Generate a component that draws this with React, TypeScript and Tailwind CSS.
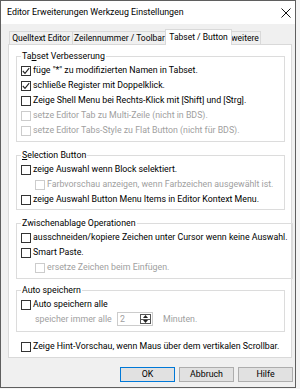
import React from "react";

type Row = {
  label: React.ReactNode;
  checked?: boolean;
  disabled?: boolean;
  indent?: boolean;
};

function CheckBox({ checked, disabled }: { checked?: boolean; disabled?: boolean }) {
  return (
    <span
      className={`flex h-[10px] w-[10px] shrink-0 items-center justify-center border bg-white ${
        disabled ? "border-[#cccccc]" : "border-[#333333]"
      }`}
    >
      {checked && (
        <svg width="8" height="8" viewBox="0 0 8 8">
          <polyline points="0.8,4 3,6.3 7.2,1.2" fill="none" stroke="#222" strokeWidth="1.1" />
        </svg>
      )}
    </span>
  );
}

function CheckRow({ label, checked, disabled, indent }: Row) {
  return (
    <div className={`flex h-[15px] items-center gap-[2px] ${indent ? "pl-[14px]" : ""}`}>
      <CheckBox checked={checked} disabled={disabled} />
      <span className={`whitespace-nowrap ${disabled ? "text-[#a0a0a0]" : "text-black"}`}>{label}</span>
    </div>
  );
}

function Group({
  title,
  children,
  className = "",
}: {
  title: React.ReactNode;
  children: React.ReactNode;
  className?: string;
}) {
  return (
    <fieldset className={`border border-[#dcdcdc] pl-[4px] pr-[4px] ${className}`}>
      <legend className="h-[13px] px-[1px] leading-[13px] text-black">{title}</legend>
      {children}
    </fieldset>
  );
}

function Tab({ label, selected, className = "" }: { label: string; selected?: boolean; className?: string }) {
  if (selected) {
    return (
      <div
        className={`relative z-10 -mx-[2px] -mb-px flex h-[16px] items-center justify-center border border-b-0 border-[#d9d9d9] bg-white pb-[1px] whitespace-nowrap ${className}`}
      >
        {label}
      </div>
    );
  }
  return (
    <div
      className={`flex h-[13px] items-center justify-center border border-b-0 border-[#d9d9d9] bg-[#f0f0f0] whitespace-nowrap ${className}`}
    >
      {label}
    </div>
  );
}

function Button({ label, primary }: { label: string; primary?: boolean }) {
  return (
    <div
      className={`flex h-[15px] w-[55px] items-center justify-center border bg-[#e1e1e1] ${
        primary ? "border-[#0078d7]" : "border-[#adadad]"
      }`}
    >
      {label}
    </div>
  );
}

export default function App() {
  return (
    <div className="h-[389px] w-[300px] bg-[#f4f4f4] font-['Roboto',sans-serif] text-[8.8px] leading-none text-black">
      <div className="flex h-[388px] w-[296px] flex-col border border-[#5f5f5f] bg-[#f0f0f0]">
        {/* title bar */}
        <div className="flex h-[23px] items-center justify-between bg-white pl-[6px] pr-[2px] text-[8.8px]">
          <span className="whitespace-nowrap">Editor Erweiterungen Werkzeug Einstellungen</span>
          <svg width="10" height="10" viewBox="0 0 10 10" className="mr-[2px]">
            <path d="M0.5 0.5 L9.5 9.5 M9.5 0.5 L0.5 9.5" stroke="#111" strokeWidth="1" />
          </svg>
        </div>

        {/* tabs */}
        <div className="mt-[5px] ml-[8px] flex h-[15px] items-end text-[8.5px]">
          <Tab label="Quelltext Editor" className="w-[64px]" />
          <Tab label="Zeilennummer / Toolbar" className="w-[94px] border-l-0" />
          <Tab label="Tabset / Button" selected className="w-[67px]" />
          <Tab label="weitere" className="w-[31px] border-l-0" />
        </div>

        {/* page */}
        <div className="ml-[7px] w-[284px] border border-[#d9d9d9] bg-white pt-[5px] pr-[6px] pb-[3px] pl-[7px]">
          <Group
            title={
              <>
                Ta<span className="underline">b</span>set Verbesserung
              </>
            }
            className="pb-[3px]"
          >
            <CheckRow checked label={'füge "*" zu modifizierten Namen in Tabset.'} />
            <CheckRow checked label="schließe Register mit Doppelklick." />
            <CheckRow label="Zeige Shell Menu bei Rechts-Klick mit [Shift] und [Strg]." />
            <CheckRow disabled label="setze Editor Tab zu Multi-Zeile (nicht in BDS)." />
            <CheckRow disabled label="setze Editor Tabs-Style zu Flat Button (nicht für BDS)." />
          </Group>

          <Group
            title={
              <>
                <span className="underline">S</span>election Button
              </>
            }
            className="mt-[7px] pb-[2px]"
          >
            <CheckRow label="zeige Auswahl wenn Block selektiert." />
            <CheckRow disabled indent label="Farbvorschau anzeigen, wenn Farbzeichen ausgewählt ist." />
            <CheckRow label="zeige Auswahl Button Menu Items in Editor Kontext Menu." />
          </Group>

          <Group title="Zwischenablage Operationen" className="mt-[7px] pb-[3px]">
            <CheckRow label="ausschneiden/kopiere Zeichen unter Cursor wenn keine Auswahl." />
            <CheckRow label="Smart Paste." />
            <CheckRow disabled indent label="ersetze Zeichen beim Einfügen." />
          </Group>

          <Group title="Auto speichern" className="mt-[5px] pb-[5px]">
            <CheckRow label="Auto speichern alle" />
            <div className="flex h-[14px] items-center pl-[14px] text-[#a0a0a0]">
              <span className="w-[82px] whitespace-nowrap">speicher immer alle</span>
              <div className="flex h-[14px] w-[36px] border border-[#cccccc] bg-white">
                <span className="flex flex-1 items-center pl-[2px]">2</span>
                <div className="my-[1px] mr-[1px] flex w-[11px] flex-col border border-[#555]">
                  <div className="flex flex-1 items-center justify-center border-b border-[#555]">
                    <svg width="5" height="3" viewBox="0 0 5 3">
                      <polygon points="0,3 5,3 2.5,0" fill="#222" />
                    </svg>
                  </div>
                  <div className="flex flex-1 items-center justify-center">
                    <svg width="5" height="3" viewBox="0 0 5 3">
                      <polygon points="0,0 5,0 2.5,3" fill="#222" />
                    </svg>
                  </div>
                </div>
              </div>
              <span className="ml-[10px] whitespace-nowrap">Minuten.</span>
            </div>
          </Group>

          <div className="mt-[7px] pl-[5px]">
            <CheckRow label="Zeige Hint-Vorschau, wenn Maus über dem vertikalen Scrollbar." />
          </div>
        </div>

        {/* buttons */}
        <div className="mt-[9px] flex justify-end gap-[4px] pr-[2px]">
          <Button label="OK" primary />
          <Button label="Abbruch" />
          <Button label="Hilfe" />
        </div>
      </div>
    </div>
  );
}
